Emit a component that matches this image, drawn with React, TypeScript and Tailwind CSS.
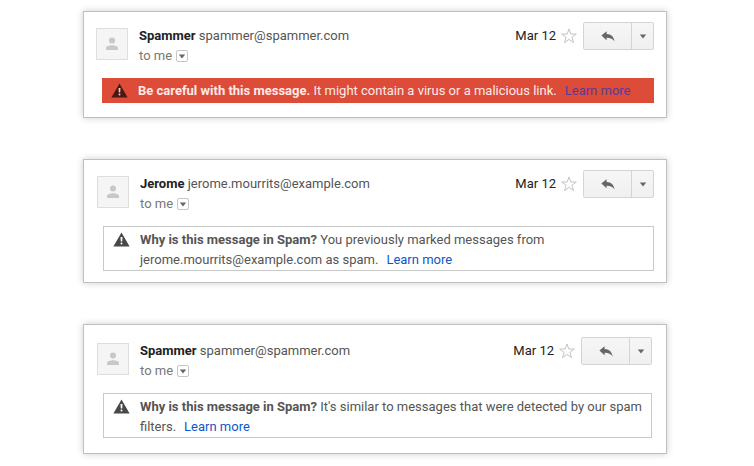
import { clsx } from "clsx";

interface Message {
  id: number;
  sender: string;
  email: string;
  date: string;
  severity: "danger" | "info";
  title: string;
  reason: string;
  cardCls: string;
}

const MESSAGES: Message[] = [
  {
    id: 1,
    sender: "Spammer",
    email: "spammer@spammer.com",
    date: "Mar 12",
    severity: "danger",
    title: "Be careful with this message.",
    reason: "It might contain a virus or a malicious link.",
    cardCls: "pt-2.5 pb-3.5 pl-3 pr-3",
  },
  {
    id: 2,
    sender: "Jerome",
    email: "jerome.mourrits@example.com",
    date: "Mar 12",
    severity: "info",
    title: "Why is this message in Spam?",
    reason:
      "You previously marked messages from jerome.mourrits@example.com as spam.",
    cardCls: "pt-2.5 pb-[11px] pl-[13px] pr-3",
  },
  {
    id: 3,
    sender: "Spammer",
    email: "spammer@spammer.com",
    date: "Mar 12",
    severity: "info",
    title: "Why is this message in Spam?",
    reason: "It's similar to messages that were detected by our spam filters.",
    cardCls: "pt-3 pb-[15px] pl-[13px] pr-3.5",
  },
];

const Caret = () => (
  <svg viewBox="0 0 8 5" className="w-2 h-[5px]" aria-hidden="true">
    <path d="M.8.5h6.4L4 4.5z" fill="#666" />
  </svg>
);

const Avatar = () => (
  <div className="w-8 h-8 mt-1.5 shrink-0 flex items-center justify-center bg-[#f5f5f5] border border-[#dedede]">
    <svg viewBox="0 0 14 14" className="w-3.5 h-3.5" fill="#c8c8c8" aria-hidden="true">
      <circle cx="7" cy="3.6" r="3" />
      <path d="M1 13v-1.8C1 9.2 4.6 8.3 7 8.3s6 .9 6 2.9V13z" />
    </svg>
  </div>
);

const WarningIcon = ({ danger }: { danger: boolean }) => (
  <svg
    viewBox="0 0 17 15"
    className="w-[17px] h-[15px] mt-0.5 shrink-0"
    aria-hidden="true"
  >
    <path
      d="M8.5.5 16.6 14.5H.4z"
      fill={danger ? "#4a1712" : "#484848"}
    />
    <path d="M7.5 5h2l-.3 4.6H7.8z" fill={danger ? "#f3c9c4" : "#fff"} />
    <circle cx="8.5" cy="11.6" r="1" fill={danger ? "#f3c9c4" : "#fff"} />
  </svg>
);

const StarIcon = () => (
  <svg viewBox="0 0 16 16" className="w-4 h-4" aria-hidden="true">
    <path
      d="M8 .9 9.8 6h5.5l-4.4 3.3 1.6 5.3L8 11.4l-4.5 3.2 1.6-5.3L.7 6h5.5z"
      fill="#fff"
      stroke="#c4c4c4"
      strokeWidth="1"
    />
  </svg>
);

const ReplyIcon = () => (
  <svg viewBox="0 0 14 11" className="w-3.5 h-[11px]" aria-hidden="true">
    <path
      d="M.4 4.6 5.6.3v2.6c4.6.2 7.4 2.8 8 7.6-1.9-2.6-4.2-3.8-8-3.7v2.5z"
      fill="#666"
    />
  </svg>
);

function Notice({ message }: { message: Message }) {
  const danger = message.severity === "danger";

  return (
    <div
      className={clsx(
        "ml-1.5 flex gap-2.5 leading-5",
        danger
          ? "bg-[#dd4b39] text-[#fdeae8] pl-[9px] pr-2 pt-[3px] pb-0.5"
          : "border border-[#c9c9c9] text-[#555] pl-[9px] pr-2 pt-[3px]",
      )}
    >
      <WarningIcon danger={danger} />
      <p>
        <b>{message.title}</b> {message.reason}
        <a
          href="#"
          className={clsx(
            "ml-2 whitespace-nowrap",
            danger ? "text-[#5b3c96]" : "text-[#1155cc]",
          )}
        >
          Learn more
        </a>
      </p>
    </div>
  );
}

function MessageCard({ message }: { message: Message }) {
  return (
    <article
      className={clsx(
        "bg-white border border-[#c0c0c0] shadow-[0_0_7px_rgba(0,0,0,0.2)]",
        message.cardCls,
      )}
    >
      <header className="flex items-start pb-3">
        <Avatar />

        {/* Sender */}
        <div className="ml-[11px] mt-1 flex-1 min-w-0 leading-5">
          <div className="truncate text-[#555]">
            <b className="text-[#222]">{message.sender}</b> {message.email}
          </div>
          <div className="flex items-center gap-1 text-[#777]">
            to me
            <button
              aria-label="Show details"
              className="w-3 h-3 flex items-center justify-center border border-[#c6c6c6] rounded-xs bg-white"
            >
              <Caret />
            </button>
          </div>
        </div>

        {/* Date and actions */}
        <div className="mt-1 flex items-center gap-[5px] leading-5 text-[#222]">
          <span>{message.date}</span>
          <button aria-label="Star">
            <StarIcon />
          </button>
        </div>
        <div className="ml-1.5 h-7 flex border border-[#d4d4d4] rounded-xs bg-linear-to-b from-[#f6f6f6] to-[#f0f0f0]">
          <button
            aria-label="Reply"
            className="w-12 flex items-center justify-center border-r border-[#d4d4d4]"
          >
            <ReplyIcon />
          </button>
          <button
            aria-label="More"
            className="w-[21px] flex items-center justify-center"
          >
            <Caret />
          </button>
        </div>
      </header>

      <Notice message={message} />
    </article>
  );
}

export default function App() {
  return (
    <main className="min-h-screen bg-white pt-[11px] pb-3 pl-[83px] pr-[87px] flex flex-col gap-[41px] font-[Roboto,Arial,sans-serif] text-[13px]">
      {MESSAGES.map((m) => (
        <MessageCard key={m.id} message={m} />
      ))}
    </main>
  );
}
